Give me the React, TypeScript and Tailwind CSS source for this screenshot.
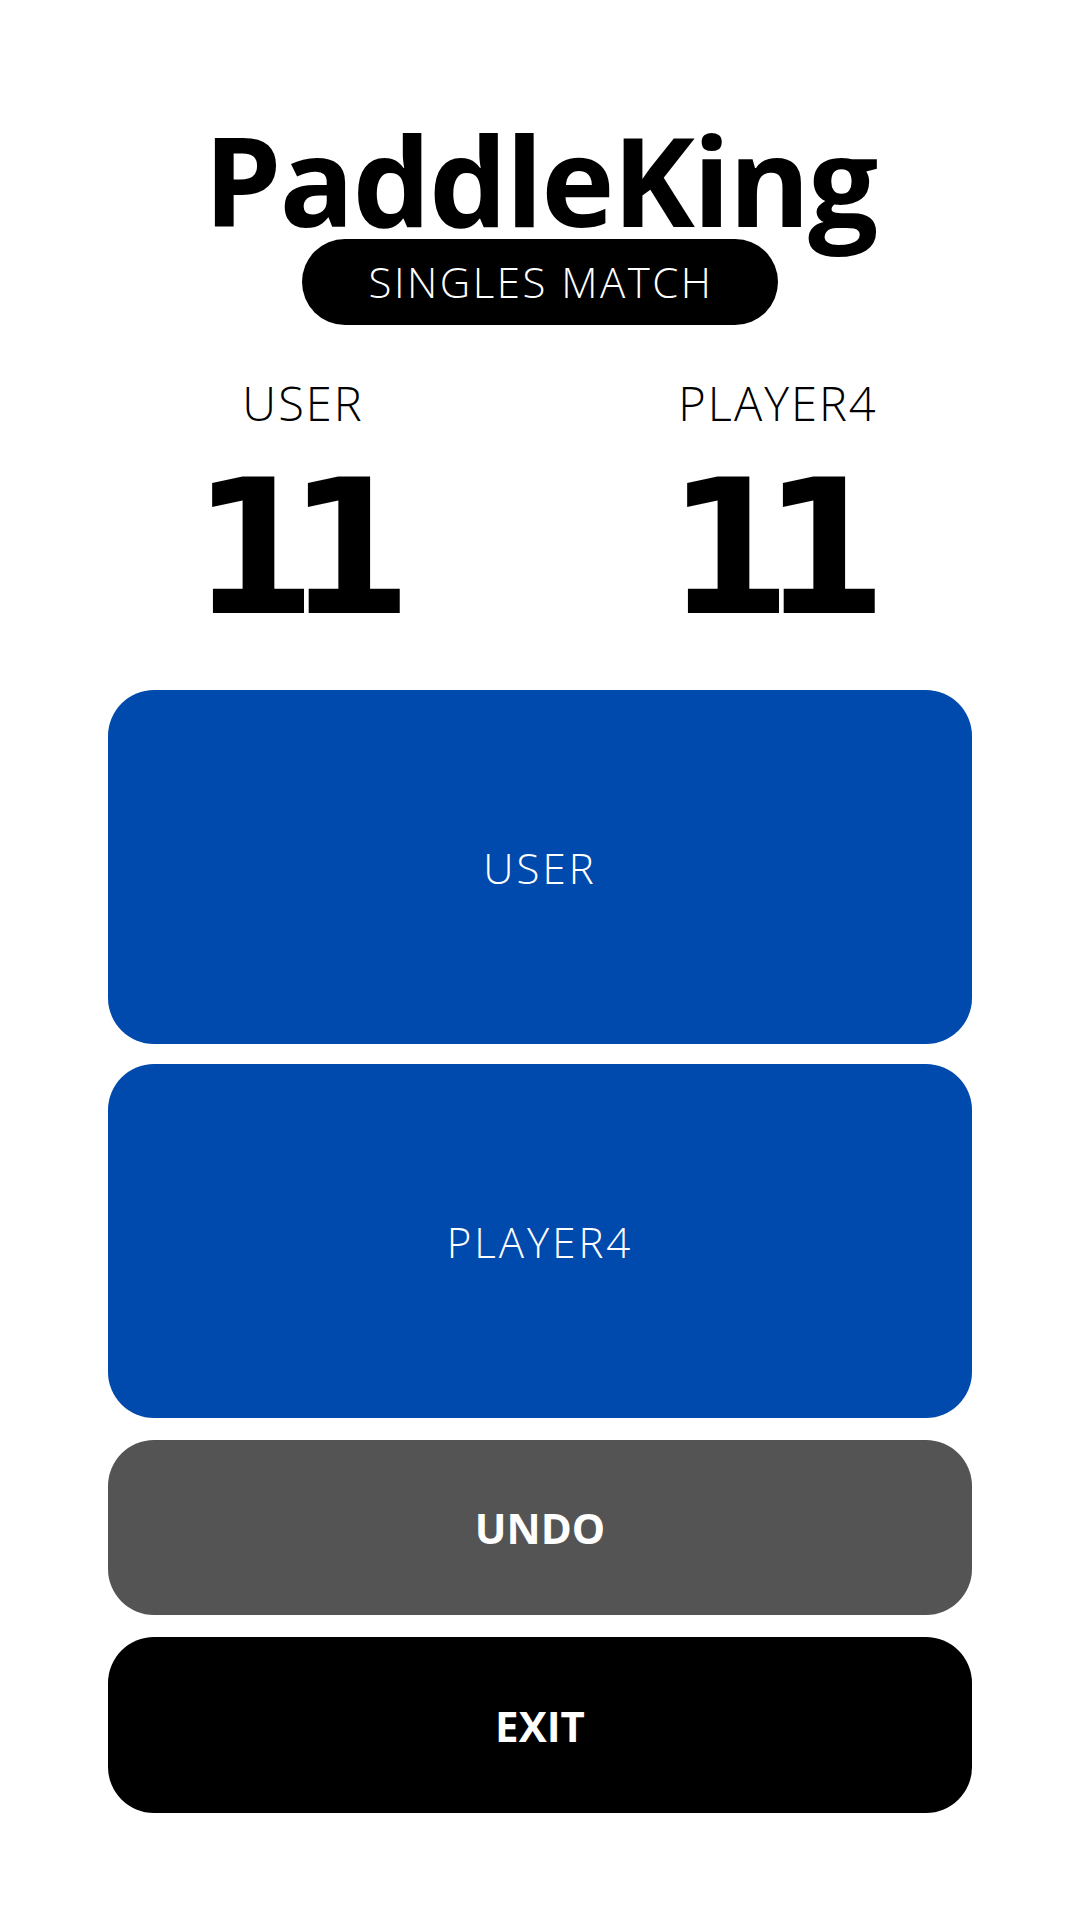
import React from "react";

export default function App() {
  const thin = { fontFamily: '"Open Sans", "Noto Sans", sans-serif' };
  return (
    <div className="w-[1080px] h-[1920px] bg-white flex flex-col items-center" style={thin}>
      <div className="mt-[104px] h-[150px] flex items-center justify-center">
        <h1 className="text-[124px] font-bold leading-none tracking-[-2px] text-black">PaddleKing</h1>
      </div>
      <div className="mt-[-15px] w-[476px] h-[86px] rounded-full bg-black flex items-center justify-center">
        <span className="text-[42px] font-light text-white leading-none tracking-[2.5px] pl-[2px]">SINGLES MATCH</span>
      </div>
      <div className="mt-[48px] w-full flex pl-[153px] gap-[175px]">
        {["USER", "PLAYER4"].map((n) => (
          <div key={n} className="w-[300px] flex flex-col items-center">
            <div className="h-[60px] flex items-center text-[47px] font-light leading-none tracking-[2px] text-black">{n}</div>
            <div
              className="mt-[22px] h-[186px] flex items-center justify-center text-[188px] font-bold leading-none text-black w-[300px] pr-[30px]"
              style={{ fontFamily: '"DejaVu Sans", sans-serif' }}
            >
              <span className="inline-block tracking-[-30px] scale-x-[0.95]">11</span>
            </div>
          </div>
        ))}
      </div>
      <div className="mt-[49px] w-[864px] flex flex-col">
        <button className="h-[354px] rounded-[46px] bg-[#004aad] text-white text-[42px] font-light tracking-[3px] flex items-center justify-center">
          USER
        </button>
        <button className="mt-[20px] h-[354px] rounded-[46px] bg-[#004aad] text-white text-[42px] font-light tracking-[3px] flex items-center justify-center">
          PLAYER4
        </button>
        <button className="mt-[22px] h-[175px] rounded-[46px] bg-[#545454] text-white text-[42px] font-bold flex items-center justify-center">
          UNDO
        </button>
        <button className="mt-[22px] h-[176px] rounded-[46px] bg-black text-white text-[42px] font-bold flex items-center justify-center">
          EXIT
        </button>
      </div>
    </div>
  );
}
